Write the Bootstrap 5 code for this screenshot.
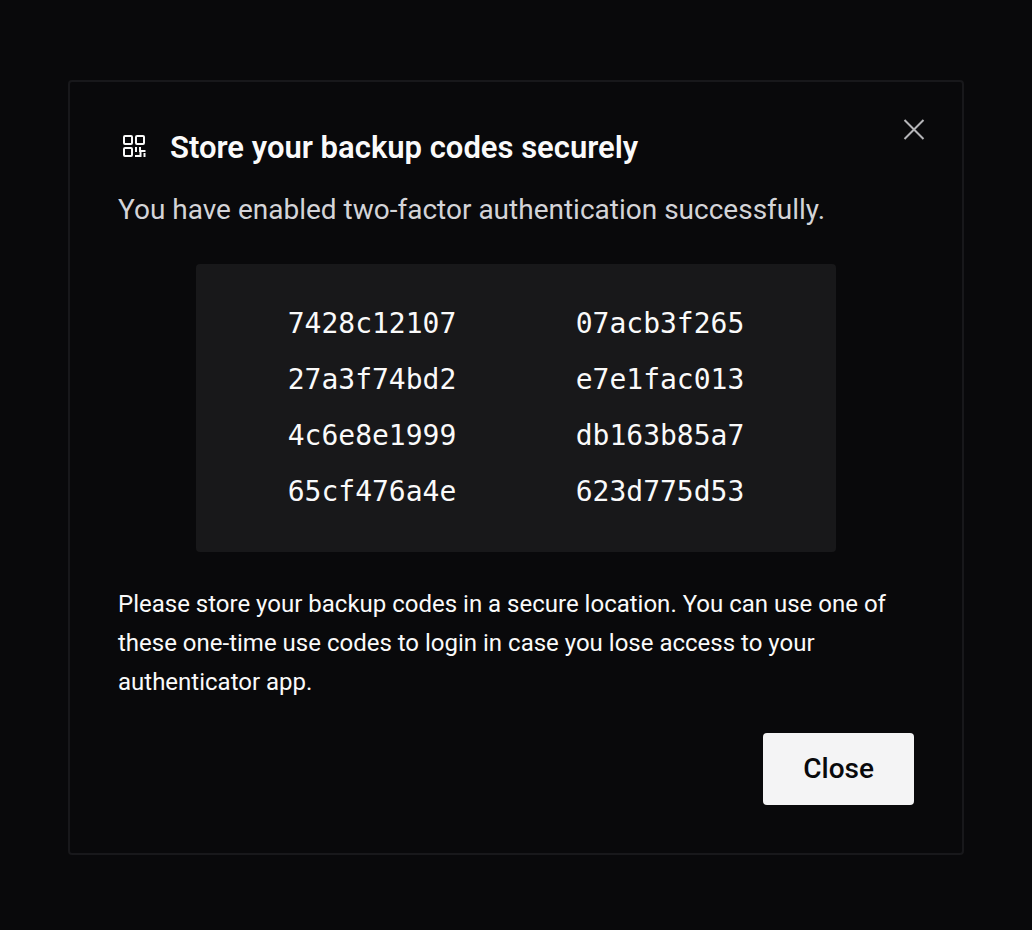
<!DOCTYPE html>
<html lang="en">
<head>
<meta charset="utf-8">
<meta name="viewport" content="width=device-width, initial-scale=1">
<title>Store your backup codes securely</title>
<link rel="stylesheet" href="https://cdn.jsdelivr.net/npm/bootstrap@5.3.0/dist/css/bootstrap.min.css">
<style>
  body { background: #09090b; color: #fafafa; font-family: Roboto, "Noto Sans", sans-serif; }
  .page-wrap { padding: 80px 68px; }
  .codes-dialog { border: 2px solid #18181b; border-radius: 4px; padding: 48px; }
  .dialog-title { font-size: 31px; font-weight: 600; line-height: 36px; }
  .title-icon { width: 32px; height: 32px; }
  .title-group { gap: 20px; }
  .dialog-lead { font-size: 28px; line-height: 40px; color: #d4d4d8; margin-top: 24px; margin-bottom: 34px; }
  .codes-panel { width: 100%; max-width: 640px; padding: 32px; background: #18181a; border-radius: 4px; }
  .code-item { font-family: "DejaVu Sans Mono", monospace; font-size: 28px; line-height: 56px; }
  .dialog-note { font-size: 24px; line-height: 39px; margin-top: 33px; margin-bottom: 31px; }
  .btn-main { --bs-btn-bg: #f4f4f5; --bs-btn-color: #09090b; --bs-btn-hover-bg: #e4e4e7; --bs-btn-hover-color: #09090b;
    --bs-btn-active-bg: #d4d4d8; --bs-btn-border-width: 0; --bs-btn-border-radius: 4px;
    --bs-btn-padding-x: 40px; --bs-btn-padding-y: 15px; --bs-btn-font-size: 28px; --bs-btn-font-weight: 500; --bs-btn-line-height: 42px; }
  .dismiss { top: 32px; right: 32px; color: #b5b5b8; line-height: 0; }
</style>
</head>
<body>
<main class="page-wrap">
  <section class="codes-dialog position-relative" role="dialog" aria-labelledby="dialogTitle">
    <header class="title-group d-flex align-items-center">
      <svg class="title-icon flex-shrink-0" viewBox="0 0 32 32" fill="none" stroke="currentColor" stroke-width="2" aria-hidden="true">
        <rect x="6" y="4" width="8" height="8" rx="1"/>
        <rect x="18" y="4" width="8" height="8" rx="1"/>
        <rect x="6" y="16" width="8" height="8" rx="1"/>
        <path d="M18 15v5M17 24h5.500v-5M22 15v4h5.500M26.500 21v4"/>
      </svg>
      <h1 class="dialog-title mb-0" id="dialogTitle">Store your backup codes securely</h1>
    </header>
    <button type="button" class="dismiss btn border-0 p-1 position-absolute" aria-label="Dismiss">
      <svg width="24" height="24" viewBox="0 0 24 24" fill="none" stroke="currentColor" stroke-width="2" aria-hidden="true"><path d="M2.500 2l19 19M21.500 2l-19 19"/></svg>
    </button>
    <p class="dialog-lead">You have enabled two-factor authentication successfully.</p>
    <div class="codes-panel mx-auto">
      <ul class="row row-cols-2 g-0 list-unstyled text-center mb-0">
        <li class="code-item col">7428c12107</li>
        <li class="code-item col">07acb3f265</li>
        <li class="code-item col">27a3f74bd2</li>
        <li class="code-item col">e7e1fac013</li>
        <li class="code-item col">4c6e8e1999</li>
        <li class="code-item col">db163b85a7</li>
        <li class="code-item col">65cf476a4e</li>
        <li class="code-item col">623d775d53</li>
      </ul>
    </div>
    <p class="dialog-note">Please store your backup codes in a secure location. You can use one of these one-time use codes to login in case you lose access to your authenticator app.</p>
    <div class="d-flex justify-content-end">
      <button type="button" class="btn btn-main">Close</button>
    </div>
  </section>
</main>
<script src="https://cdn.jsdelivr.net/npm/bootstrap@5.3.0/dist/js/bootstrap.bundle.min.js"></script>
</body>
</html>
